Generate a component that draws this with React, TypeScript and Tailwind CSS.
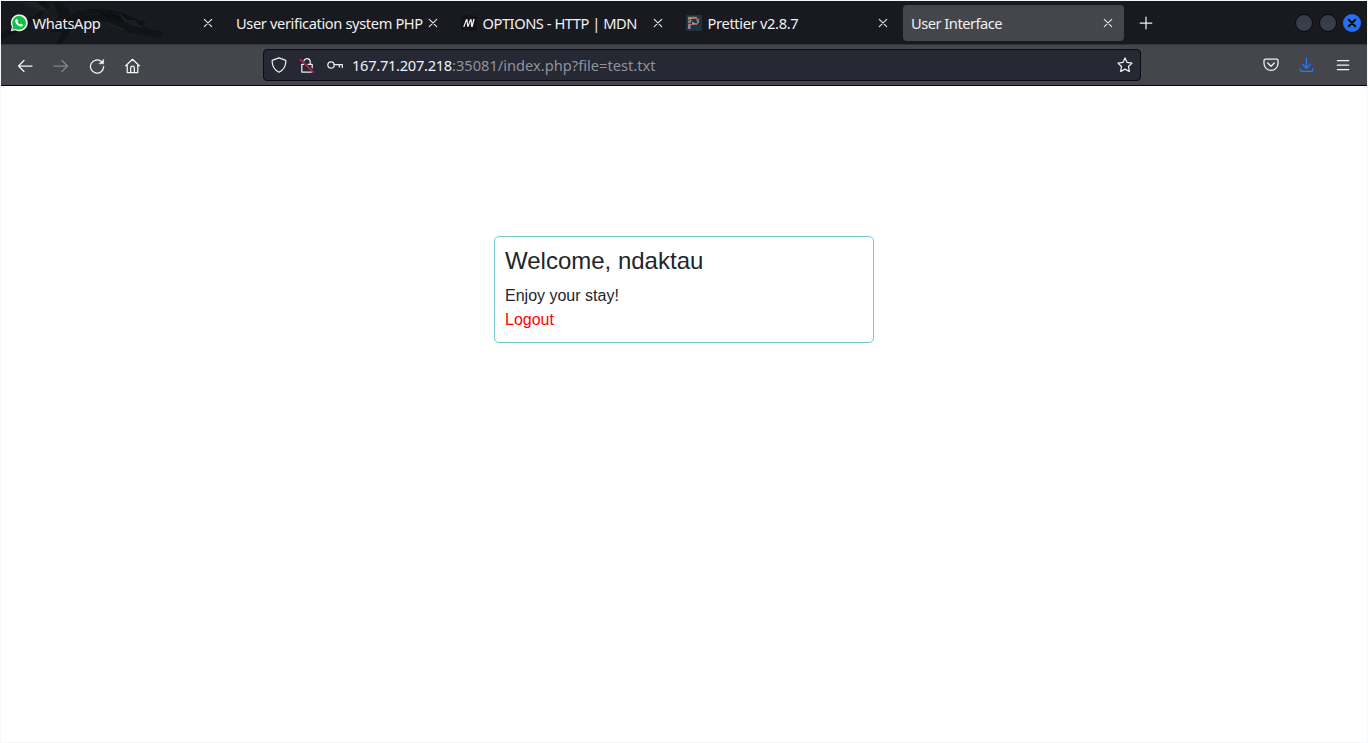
import type { ReactNode } from "react";

function CloseIcon() {
  return (
    <svg className="size-4 shrink-0" viewBox="0 0 16 16" fill="none" stroke="#e4e4e6" strokeWidth="1.15" strokeLinecap="round">
      <path d="M4.3 4.3l7.4 7.4M11.7 4.3l-7.4 7.4" />
    </svg>
  );
}

function WhatsAppIcon() {
  return (
    <svg className="size-[18px] shrink-0" viewBox="0 0 18 18">
      <path d="M.8 17.2l1.1-4.4A8.4 8.4 0 1 1 5.3 16.2z" fill="#f4f7f5" />
      <path d="M2.3 15.7l.9-3.2a6.9 6.9 0 1 1 2.5 2.4z" fill="#12c044" />
      <path
        d="M5.3 6.7c.1-1 .8-1.7 1.5-1.6.4 0 .5.2.7.7l.5 1.1c.1.3-.3.7-.6 1.1.7 1.2 1.5 2 2.8 2.5.4-.4.7-1 1.1-.8l1.5.8c.3.2.2.5 0 1-.5 1-1.7 1.3-2.8.9-2.4-.7-4.8-3.4-4.7-5.7z"
        fill="#fff"
      />
    </svg>
  );
}

function MdnIcon() {
  return (
    <svg className="size-4 shrink-0" viewBox="0 0 16 16" fill="none">
      <rect width="16" height="16" rx="1.5" fill="#141418" />
      <path d="M2.8 12L5.6 4.2M6 4.2l.7 7.6M6.9 11.8L9.7 4.2M10.1 4.2l.5 7.6" stroke="#eeeeee" strokeWidth="1.15" />
      <path d="M10.9 12L13 4" stroke="#eeeeee" strokeWidth="1.4" />
    </svg>
  );
}

function PrettierIcon() {
  return (
    <svg className="size-4 shrink-0" viewBox="0 0 16 16" fill="none" strokeWidth="1.2">
      <rect width="16" height="16" rx="1" fill="#1d3440" />
      <path d="M2 2.4h4M2 6.4h3M11 7.4h2" stroke="#409d9d" />
      <path d="M6 2.4h5M10.5 5.4H13M2 9.4h3" stroke="#ab7866" />
      <path d="M2 3.5h5M10 4h3M6 8.5h3M2 12.5h2" stroke="#c08f50" />
      <path d="M7 3.5h3M2 7.4h3M9 8.5h3M2 13.5h3" stroke="#a06b91" />
      <path d="M2 4.8h3M11 6.5h2M5 9.5h6M2 10.5h3" stroke="#c15d62" />
      <path d="M4 5.5h2M6 7.5h2M2 11.4h3" stroke="#5b97a0" />
    </svg>
  );
}

function Tab({ title, icon, active = false, tracking }: { title: string; icon?: ReactNode; active?: boolean; tracking: string }) {
  return (
    <div className={`mx-0.5 flex h-9 w-[221px] shrink-0 items-center rounded px-2 ${active ? "bg-[#44464c]" : ""}`}>
      {icon && <span className="mr-[5.5px] flex size-4 shrink-0 items-center justify-center">{icon}</span>}
      <span className={`min-w-0 flex-1 whitespace-nowrap text-[14.67px] leading-5 text-[#f0f0f2] ${tracking}`}>{title}</span>
      <CloseIcon />
    </div>
  );
}

function Dragon() {
  return (
    <svg className="pointer-events-none absolute left-0 top-0 h-[43px] w-[180px]" viewBox="0 0 180 43" fill="#121317">
      <path d="M0 32C13 26 31 17 43 8L18 0h28l3 5C38 18 22 29 0 39z" />
      <path d="M35 1l13 9-8-1-22-8z" fill="#202126" />
      <path d="M52 1h8l10 11-10 19H49l9-17z" />
      <path d="M68 16C83 5 106 6 124 13l15 7 6 7 18 4-5 6-12-3-19-3-14-8c-16-5-29-4-40 2L60 43h-5l13-27z" />
      <path d="M82 15c20-4 33-1 47 9l11 3-5-7c-15-8-31-11-53-5z" fill="#1c1d22" />
      <path d="M102 15l-7-6 13 4 4 6zM113 17l-8-7 14 5 4 6zM126 19l-6-6 15 6zM137 22l5-2 3 3z" fill="#0d0e12" />
      <path d="M134 24l8 2M105 22l19 7" stroke="#26282e" strokeWidth=".7" fill="none" />
    </svg>
  );
}

function Line({ children, className = "text-[#f4f4f5]" }: { children: ReactNode; className?: string }) {
  return (
    <svg className={`size-4 shrink-0 ${className}`} viewBox="0 0 16 16" fill="none" stroke="currentColor" strokeWidth="1.25" strokeLinecap="round" strokeLinejoin="round">
      {children}
    </svg>
  );
}

function Toolbar() {
  return (
    <div className="flex h-[41px] items-center border-b border-[#07080a] bg-[#44464c]">
      <div className="flex w-[262px] items-center gap-5 pl-4 pt-px">
        <Line><path d="M15 8H1.5M7 2.5L1.5 8 7 13.5" /></Line>
        <Line className="text-[#85868a]"><path d="M1 8h13.5M9 2.5L14.5 8 9 13.5" /></Line>
        <Line>
          <path d="M14.7 8.5A6.6 6.6 0 1 1 12.5 3.6" />
          <path d="M14.6 1.4v4.4h-4.4z" fill="currentColor" strokeWidth=".5" />
        </Line>
        <Line><path d="M.7 7.8L7.5 1.2l6.8 6.6M2.2 7v7.5h10.6V7M5.7 14.3V10a1.8 1.8 0 0 1 3.6 0v4.3" /></Line>
      </div>
      <div className="flex h-8 w-[878px] items-center rounded border border-[#0b0c10] bg-[#262833] px-[7px]">
        <Line className="mr-3 text-[#ececee]"><path d="M8 .8l6.2 2.4c.5.2.7.5.7.9C14.7 10 12 13.4 8 15.3 4 13.4 1.3 10 1.1 4.1c0-.4.2-.7.7-.9z" /></Line>
        <Line className="mr-3 text-[#ececee]">
          <path d="M5 3.8a3.2 3.2 0 0 1 6.2.8v3M9 7.3h4.2v3.5M4.5 7.3H2.8V15h9.5" />
          <path d="M1.2 2.6l13.2 12.6" stroke="#e31b4b" strokeWidth="1.4" />
        </Line>
        <Line className="mr-[9px] text-[#ececee]"><circle cx="4" cy="8" r="3.2" /><path d="M7.2 7.5h8.1v3M12.3 7.5v2.4" /></Line>
        <span className="flex-1 whitespace-nowrap text-[14.67px] leading-5 text-[#92939a]">
          <span className="tracking-[-0.29px] text-[#f1f1f4]">167.71.207.218</span>:35081/index.php?file=test.txt
        </span>
        <Line className="text-[#f1f1f2]"><path d="M8 .9l2.1 4.5 4.9.7-3.5 3.4.8 5L8 12.1l-4.3 2.4.8-5L1 6.1l4.9-.7z" /></Line>
      </div>
      <div className="ml-auto flex items-center gap-5 pr-4">
        <Line><path d="M2.2 2h11.6c.7 0 1.2.5 1.2 1.2v3.2a7 7 0 0 1-14 0V3.2C1 2.5 1.5 2 2.2 2zM4.7 6L8 9.3 11.3 6" /></Line>
        <Line className="text-[#2c75f5]"><path d="M7.5 1v10M3.7 7.4l3.8 3.8 3.8-3.8M1.3 11.7v1c0 1 .7 1.7 1.7 1.7h9c1 0 1.7-.7 1.7-1.7v-1" /></Line>
        <Line><path d="M2.3 3.5h11.4M2.3 8h11.4M2.3 12.5h11.4" /></Line>
      </div>
    </div>
  );
}

export default function App() {
  return (
    <div className="flex h-[743px] w-[1368px] flex-col overflow-hidden border border-[#f5f6f7] bg-white font-['Noto_Sans',sans-serif]">
      <header className="shrink-0">
        <div className="relative flex h-11 items-center border-b border-[#303238] bg-[#191a1f]">
          <Dragon />
          <div className="relative flex items-center">
            <Tab title="WhatsApp" tracking="tracking-[-0.32px]" icon={<WhatsAppIcon />} />
            <Tab title="User verification system PHP" tracking="tracking-[-0.38px]" />
            <Tab title="OPTIONS - HTTP | MDN" tracking="tracking-[-0.45px]" icon={<MdnIcon />} />
            <Tab title="Prettier v2.8.7" tracking="tracking-[-0.33px]" icon={<PrettierIcon />} />
            <Tab title="User Interface" tracking="tracking-[-0.5px]" active />
          </div>
          <Line className="ml-[11.5px] text-[#f1f1f2]"><path d="M8 2.2v11.6M2.2 8h11.6" /></Line>
          <div className="ml-auto flex items-center gap-1.5 pr-1.5">
            <span className="size-[18px] rounded-full border border-[#090a0d] bg-[#373d49]" />
            <span className="size-[18px] rounded-full border border-[#090a0d] bg-[#373d49]" />
            <svg className="size-[18px]" viewBox="0 0 18 18">
              <circle cx="9" cy="9" r="9" fill="#256ff1" />
              <path d="M5.8 5.8l6.4 6.4M12.2 5.8l-6.4 6.4" stroke="#05070c" strokeWidth="2.1" strokeLinecap="round" />
            </svg>
          </div>
        </div>
        <Toolbar />
      </header>
      <main className="flex flex-1 justify-center bg-white pt-[150px] font-['Liberation_Sans',Arial,sans-serif] text-base leading-6 text-[#212529]">
        <section className="h-[107px] w-[380px] rounded-[5px] border border-[#76c9d1] p-2.5">
          <h1 className="mb-2 text-2xl leading-[28.8px]">Welcome, ndaktau</h1>
          <p>Enjoy your stay!</p>
          <a href="#" className="block text-[#ff0000]">Logout</a>
        </section>
      </main>
    </div>
  );
}
